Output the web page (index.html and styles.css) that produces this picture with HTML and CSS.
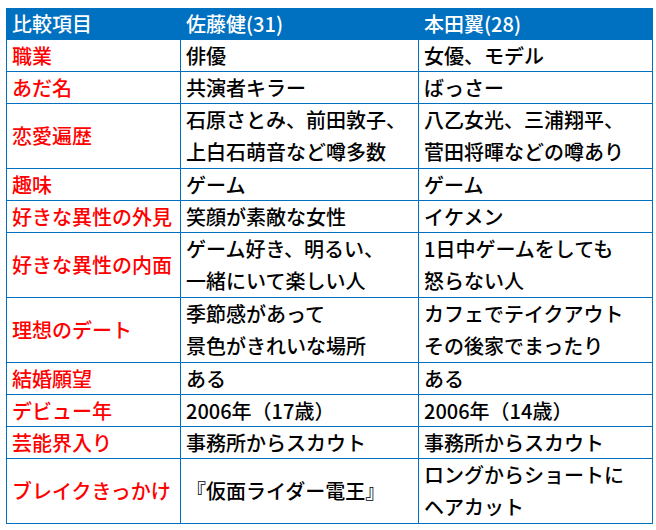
FILE: index.html
```html
<!DOCTYPE html>
<html lang="ja">
<head>
<meta charset="utf-8">
<link rel="stylesheet" href="styles.css">
</head>
<body>
<table class="cmp">
  <colgroup>
    <col class="c1"><col class="c2"><col class="c3">
  </colgroup>
  <thead>
    <tr><th>比較項目</th><th>佐藤健(31)</th><th>本田翼(28)</th></tr>
  </thead>
  <tbody>
    <tr><td class="k">職業</td><td>俳優</td><td>女優、モデル</td></tr>
    <tr><td class="k">あだ名</td><td>共演者キラー</td><td>ばっさー</td></tr>
    <tr class="two"><td class="k">恋愛遍歴</td><td>石原さとみ、前田敦子、<br>上白石萌音など噂多数</td><td>八乙女光、三浦翔平、<br>菅田将暉などの噂あり</td></tr>
    <tr><td class="k">趣味</td><td>ゲーム</td><td>ゲーム</td></tr>
    <tr><td class="k">好きな異性の外見</td><td>笑顔が素敵な女性</td><td>イケメン</td></tr>
    <tr class="two"><td class="k">好きな異性の内面</td><td>ゲーム好き、明るい、<br>一緒にいて楽しい人</td><td>1日中ゲームをしても<br>怒らない人</td></tr>
    <tr class="two"><td class="k">理想のデート</td><td>季節感があって<br>景色がきれいな場所</td><td>カフェでテイクアウト<br>その後家でまったり</td></tr>
    <tr><td class="k">結婚願望</td><td>ある</td><td>ある</td></tr>
    <tr><td class="k">デビュー年</td><td>2006年（17歳）</td><td>2006年（14歳）</td></tr>
    <tr><td class="k">芸能界入り</td><td>事務所からスカウト</td><td>事務所からスカウト</td></tr>
    <tr class="two"><td class="k">ブレイクきっかけ</td><td>『仮面ライダー電王』</td><td>ロングからショートに<br>ヘアカット</td></tr>
  </tbody>
</table>
</body>
</html>
```

FILE: styles.css
```css
html, body {
  margin: 0;
  background: #ffffff;
}
body {
  padding: 8px 4px 0 6px;
  font-family: "Noto Sans CJK JP", "Noto Sans", sans-serif;
}
.cmp {
  border-collapse: collapse;
  width: 646px;
  table-layout: fixed;
  font-size: 20px;
}
.c1 { width: 174px; }
.c2 { width: 238px; }
.c3 { width: 234px; }
.cmp th, .cmp td {
  border: 1px solid #0070c0;
  padding: 0 0 0 5px;
  text-align: left;
  vertical-align: middle;
  white-space: nowrap;
  line-height: 31px;
  color: #000;
  font-weight: 500;
}
.cmp th {
  background: #0070c0;
  color: #ffffff;
  font-weight: 500;
  line-height: 30px;
}
.cmp td.k {
  color: #ff0000;
  font-weight: 500;
}
.cmp tr.two td {
  line-height: 32px;
}
```
